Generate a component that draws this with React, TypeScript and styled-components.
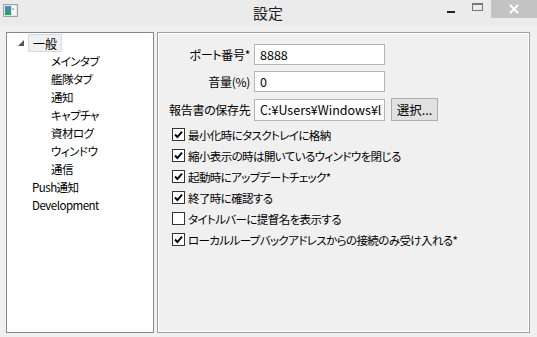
import React from "react";
import styled, { createGlobalStyle } from "styled-components";

const Global = createGlobalStyle`
  html, body { margin: 0; padding: 0; background: #f0f0f0; }
  body { font-family: "Noto Sans CJK JP", "Noto Sans", sans-serif; }
`;

const FONT = `"Noto Sans CJK JP", "Noto Sans", sans-serif`;

const Window = styled.div`
  width: 537px;
  height: 337px;
  display: flex;
  flex-direction: column;
  background: #f0f0f0;
  overflow: hidden;
  font-family: ${FONT};
  font-feature-settings: "palt" 1;
  color: #000;
`;

const TitleBar = styled.div`
  height: 26px;
  flex: none;
  display: flex;
  align-items: flex-start;
  background: #ebebeb;
`;

const AppIcon = styled.div`
  width: 15px;
  height: 13px;
  margin: 4px 0 0 3px;
  display: flex;
`;

const Title = styled.div`
  flex: 1;
  text-align: center;
  font-size: 15px;
  line-height: 26px;
  color: #222;
  padding-left: 80px;
`;

const Controls = styled.div`
  display: flex;
  align-items: flex-start;
  height: 18px;
`;

const CtrlButton = styled.div<{ $w: number; $close?: boolean }>`
  width: ${(p) => p.$w}px;
  height: 18px;
  display: flex;
  align-items: center;
  justify-content: center;
  background: ${(p) => (p.$close ? "#c3c3c3" : "transparent")};
`;

const Body = styled.div`
  flex: 1;
  display: flex;
  gap: 3px;
  padding: 6px 7px 4px 6px;
  min-height: 0;
`;

const Tree = styled.div`
  width: 146px;
  border: 1px solid #828790;
  background: #fff;
  padding-top: 1px;
  display: flex;
  flex-direction: column;
`;

const TreeRow = styled.div<{ $indent: number }>`
  height: 18px;
  display: flex;
  align-items: center;
  padding-left: ${(p) => p.$indent}px;
  font-size: 11.5px;
  letter-spacing: -0.5px;
  white-space: nowrap;
`;

const Expander = styled.div`
  width: 10px;
  display: flex;
  align-items: center;
  margin-right: 5px;
`;

const Selected = styled.span`
  display: inline-flex;
  align-items: center;
  height: 16px;
  padding: 0 4px;
  background: #f0f0f0;
  border: 1px solid #dadada;
  margin-left: -5px;
  letter-spacing: 0;
  font-size: 12px;
`;

const Panel = styled.div`
  flex: 1;
  border: 1px solid #a0a0a0;
  box-shadow: inset 1px 1px 0 #fff, inset -1px -1px 0 #fff;
  padding: 11px 0 0 11px;
  display: flex;
  flex-direction: column;
`;

const Form = styled.div`
  display: grid;
  grid-template-columns: 81px 131px auto;
  column-gap: 4px;
  row-gap: 6px;
  align-items: center;
`;

const Label = styled.div`
  font-size: 12px;
  letter-spacing: -0.3px;
  text-align: right;
  white-space: nowrap;
`;

const Input = styled.div<{ $h?: number }>`
  height: ${(p) => p.$h ?? 21}px;
  box-sizing: border-box;
  border: 1px solid #b4b4b4;
  background: #fff;
  font-size: 12.5px;
  display: flex;
  align-items: center;
  padding-left: 5px;
  overflow: hidden;
  white-space: nowrap;
  font-feature-settings: normal;
`;

const Button = styled.div`
  width: 47px;
  height: 23px;
  box-sizing: border-box;
  border: 1px solid #adadad;
  background: #e1e1e1;
  font-size: 12.5px;
  display: flex;
  align-items: center;
  justify-content: center;
  margin-left: 2px;
`;

const Checks = styled.div`
  display: flex;
  flex-direction: column;
  margin-top: 3px;
  padding-left: 3px;
`;

const CheckRow = styled.div`
  height: 21px;
  display: flex;
  align-items: center;
  gap: 1px;
  font-size: 11.5px;
  letter-spacing: -0.6px;
  white-space: nowrap;
`;

const Box = styled.div`
  width: 13px;
  height: 13px;
  box-sizing: border-box;
  border: 1px solid #333;
  background: #fff;
  display: flex;
  align-items: center;
  justify-content: center;
  margin-right: 2px;
`;

const Check = ({ checked, children }: { checked: boolean; children: React.ReactNode }) => (
  <CheckRow>
    <Box>
      {checked && (
        <svg width="9" height="9" viewBox="0 0 9 9">
          <path d="M1 4.5 L3.4 7 L8 1.6" stroke="#000" strokeWidth="1.9" fill="none" />
        </svg>
      )}
    </Box>
    <span>{children}</span>
  </CheckRow>
);

const children = ["メインタブ", "艦隊タブ", "通知", "キャプチャ", "資材ログ", "ウィンドウ", "通信"];

export default function App() {
  return (
    <Window>
      <Global />
      <TitleBar>
        <AppIcon>
          <svg width="15" height="13" viewBox="0 0 15 13">
            <defs>
              <linearGradient id="g" x1="0" y1="0" x2="0" y2="1">
                <stop offset="0" stopColor="#4a8fc9" />
                <stop offset="1" stopColor="#2e9a5a" />
              </linearGradient>
            </defs>
            <rect x="0.5" y="0.5" width="14" height="12" fill="#dfe6ec" stroke="#9aa3ab" />
            <rect x="2" y="2" width="6" height="9" fill="url(#g)" />
            <rect x="9" y="2" width="4" height="9" fill="#f6f9fb" />
            <rect x="9" y="4" width="2" height="2" fill="#9fc4d8" />
          </svg>
        </AppIcon>
        <Title>設定</Title>
        <Controls>
          <CtrlButton $w={26}>
            <svg width="9" height="12" viewBox="0 0 9 12">
              <rect x="0" y="8" width="8" height="2" fill="#222" />
            </svg>
          </CtrlButton>
          <CtrlButton $w={27}>
            <svg width="11" height="12" viewBox="0 0 11 12">
              <rect x="0.5" y="0.5" width="10" height="7" fill="none" stroke="#777" />
              <rect x="0" y="0" width="11" height="2" fill="#777" />
            </svg>
          </CtrlButton>
          <CtrlButton $w={46} $close>
            <svg width="10" height="10" viewBox="0 0 10 10">
              <path d="M1 1 L9 9 M9 1 L1 9" stroke="#fff" strokeWidth="2" />
            </svg>
          </CtrlButton>
        </Controls>
      </TitleBar>
      <Body>
        <Tree>
          <TreeRow $indent={11}>
            <Expander>
              <svg width="6" height="6" viewBox="0 0 6 6">
                <path d="M6 0 L6 6 L0 6 Z" fill="#555" />
              </svg>
            </Expander>
            <Selected>一般</Selected>
          </TreeRow>
          {children.map((c) => (
            <TreeRow key={c} $indent={44}>
              {c}
            </TreeRow>
          ))}
          <TreeRow $indent={25}>Push通知</TreeRow>
          <TreeRow $indent={25}>Development</TreeRow>
        </Tree>
        <Panel>
          <Form>
            <Label>ポート番号*</Label>
            <Input>8888</Input>
            <span />
            <Label>音量(%)</Label>
            <Input>0</Input>
            <span />
            <Label>報告書の保存先</Label>
            <Input $h={22}>C:¥Users¥Windows¥l</Input>
            <Button>選択...</Button>
          </Form>
          <Checks>
            <Check checked>最小化時にタスクトレイに格納</Check>
            <Check checked>縮小表示の時は開いているウィンドウを閉じる</Check>
            <Check checked>起動時にアップデートチェック*</Check>
            <Check checked>終了時に確認する</Check>
            <Check checked={false}>タイトルバーに提督名を表示する</Check>
            <Check checked>ローカルループバックアドレスからの接続のみ受け入れる*</Check>
          </Checks>
        </Panel>
      </Body>
    </Window>
  );
}
